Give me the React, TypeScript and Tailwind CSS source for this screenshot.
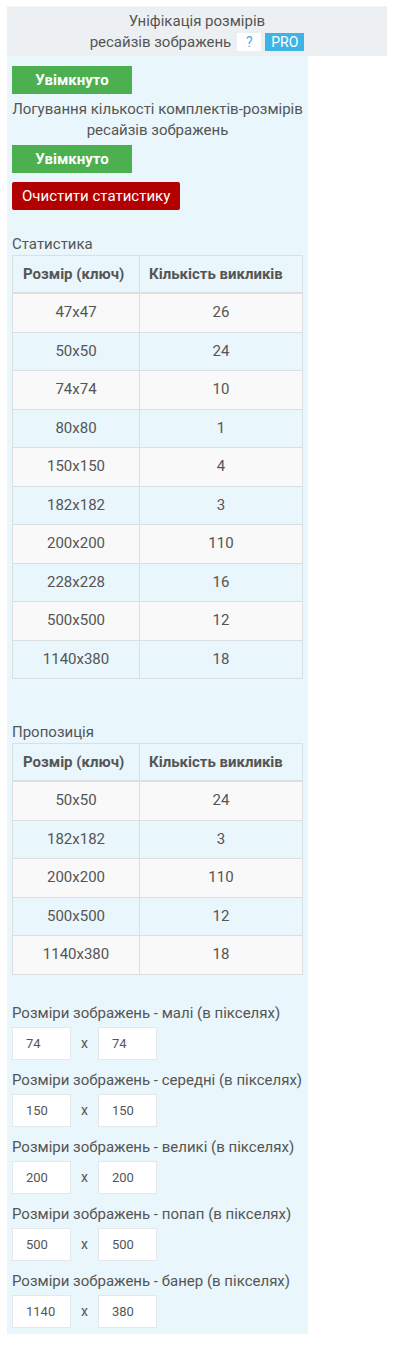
import React from 'react';

const stats: [string, string][] = [
  ['47x47', '26'],
  ['50x50', '24'],
  ['74x74', '10'],
  ['80x80', '1'],
  ['150x150', '4'],
  ['182x182', '3'],
  ['200x200', '110'],
  ['228x228', '16'],
  ['500x500', '12'],
  ['1140x380', '18'],
];

const proposal: [string, string][] = [
  ['50x50', '24'],
  ['182x182', '3'],
  ['200x200', '110'],
  ['500x500', '12'],
  ['1140x380', '18'],
];

const sizes = [
  { label: 'Розміри зображень - малі (в пікселях)', w: '74', h: '74' },
  { label: 'Розміри зображень - середні (в пікселях)', w: '150', h: '150' },
  { label: 'Розміри зображень - великі (в пікселях)', w: '200', h: '200' },
  { label: 'Розміри зображень - попап (в пікселях)', w: '500', h: '500' },
  { label: 'Розміри зображень - банер (в пікселях)', w: '1140', h: '380' },
];

const StatTable: React.FC<{ rows: [string, string][] }> = ({ rows }) => (
  <div className="w-[291px] border-t border-l border-r border-[#dadfe2]">
    <div className="flex h-[38px] border-b-2 border-[#dadfe2] font-bold">
      <div className="w-[127px] border-r border-[#dadfe2] pl-[10px] flex items-center">Розмір (ключ)</div>
      <div className="flex-1 pl-[9px] flex items-center">Кількість викликів</div>
    </div>
    {rows.map(([k, v], i) => (
      <div
        key={k}
        className={`flex h-[38.5px] border-b border-[#dadfe2] ${i % 2 === 0 ? 'bg-[#f9f9f9]' : ''}`}
      >
        <div className="w-[127px] border-r border-[#dadfe2] flex items-center justify-center">{k}</div>
        <div className="flex-1 flex items-center justify-center">{v}</div>
      </div>
    ))}
  </div>
);

const SizeInput: React.FC<{ value: string }> = ({ value }) => (
  <input
    readOnly
    value={value}
    className="w-[59px] h-[33px] bg-white border border-[#e4e8ea] pl-[13px] text-[13px] text-[#555] outline-none"
  />
);

const App: React.FC = () => {
  return (
    <div className="min-h-[1351px] bg-white pt-[6px] px-[7px] text-[15px] leading-[21px] text-[#555] font-['Roboto',sans-serif]">
      {/* Title */}
      <div className="w-[380px] h-[50px] bg-[#edf0f2] border-t border-[#f4f5f6] flex flex-col items-center justify-center text-center">
        <div>Уніфікація розмірів</div>
        <div className="flex items-center gap-[4px]">
          <span>ресайзів зображень</span>
          <span className="ml-[2px] bg-white text-[#3fb0e2] text-[14px] leading-[18px] w-[24px] text-center">?</span>
          <span className="bg-[#3eb4e6] text-white text-[14px] leading-[18px] px-[6px]">PRO</span>
        </div>
      </div>

      {/* Panel */}
      <div className="w-[301px] bg-[#e9f6fb] px-[5px] pt-[10px] pb-[6px]">
        <button className="w-[120px] h-[28px] bg-[#4caf50] text-white font-bold text-[15px]">Увімкнуто</button>
        <div className="mt-[5px] text-center">
          Логування кількості комплектів-розмірів
          <br />
          ресайзів зображень
        </div>
        <button className="mt-[4px] w-[120px] h-[28px] bg-[#4caf50] text-white font-bold text-[15px]">Увімкнуто</button>
        <button className="mt-[9px] block h-[28px] px-[10px] rounded-[2px] bg-[#b20000] text-white text-[15px]">
          Очистити статистику
        </button>

        <div className="mt-[24px]">Статистика</div>
        <StatTable rows={stats} />

        <div className="mt-[43px]">Пропозиція</div>
        <StatTable rows={proposal} />

        <div className="mt-[28px] flex flex-col gap-[10px]">
          {sizes.map((s) => (
            <div key={s.label}>
              <div>{s.label}</div>
              <div className="mt-[3px] flex items-center">
                <SizeInput value={s.w} />
                <span className="w-[27px] text-center text-[14px]">x</span>
                <SizeInput value={s.h} />
              </div>
            </div>
          ))}
        </div>
      </div>
    </div>
  );
};

export default App;
